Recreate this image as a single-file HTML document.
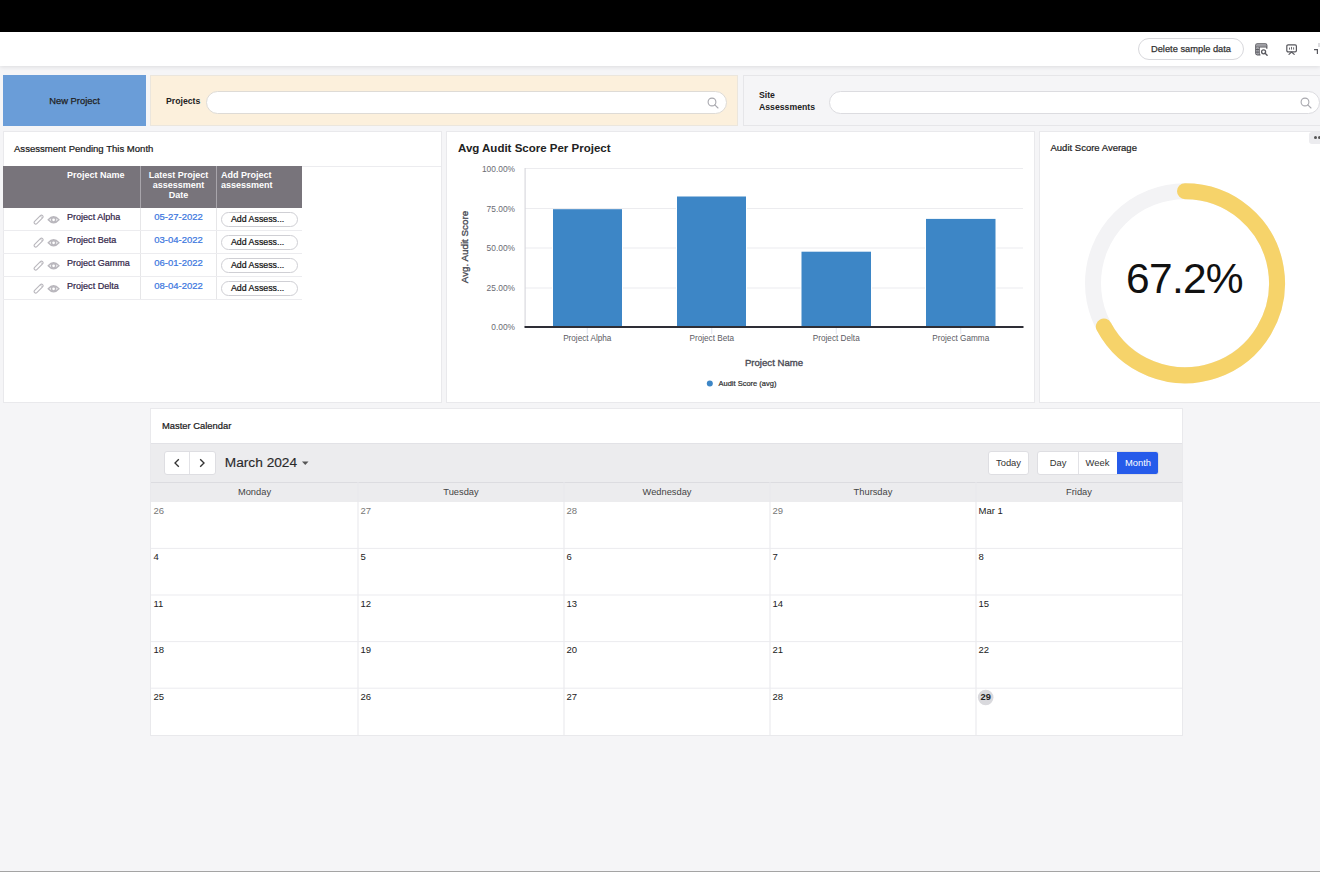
<!DOCTYPE html>
<html><head><meta charset="utf-8">
<style>
*{box-sizing:border-box;margin:0;padding:0}
html,body{width:1320px;height:872px;overflow:hidden;background:#f5f5f7;font-family:"Liberation Sans",sans-serif;color:#222}
.abs{position:absolute}
#topbar{left:0;top:0;width:1320px;height:32px;background:#000}
#hdr{left:0;top:32px;width:1320px;height:34px;background:#fff;box-shadow:0 1px 4px rgba(0,0,0,.10)}
#bottom{left:0;top:871px;width:1320px;height:1px;background:#a4a4a4}
.pill{border:1px solid #d8d8dc;border-radius:12px;background:#fff}
.th{font-size:9px;font-weight:bold;color:#fff;line-height:10px;white-space:nowrap}
.ylab{width:60px;text-align:right;font-size:8.4px;color:#6b6b73;line-height:12px}
.xlab{width:100px;text-align:center;font-size:8.2px;color:#5b5b63;white-space:nowrap}
.calbtn{background:#fff;border:1px solid #dedee2;border-radius:3px;color:#333}
.sb{-webkit-text-stroke-width:0.22px}
.panel{background:#fff;border:1px solid #e9e9ec}
</style></head>
<body>
<div id="topbar" class="abs"></div>
<div id="hdr" class="abs">
  <div class="abs pill" style="left:1138px;top:6px;width:106px;height:22px;font-size:9.3px;line-height:20px;text-align:center;color:#333;-webkit-text-stroke:0.25px #333">Delete sample data</div>

  <svg class="abs" style="left:1255px;top:11px" width="14" height="13" viewBox="0 0 14 13">
    <path d="M11.8 5.8 V2.3 Q11.8 0.8 10.3 0.8 H2.3 Q0.8 0.8 0.8 2.3 V10.3 Q0.8 11.8 2.3 11.8 H5.4" fill="none" stroke="#58585e" stroke-width="1.25"/>
    <rect x="1.2" y="1.3" width="10.2" height="2.4" fill="#9a9aa0"/>
    <path d="M0.8 4 H11.8" stroke="#58585e" stroke-width="1"/>
    <path d="M4.2 4 V11.8" stroke="#58585e" stroke-width="1.1"/>
    <rect x="1.3" y="4.6" width="2.4" height="6.6" fill="#9a9aa0"/>
    <path d="M0.8 6.6 H4.2 M0.8 9.1 H4.2" stroke="#58585e" stroke-width="1"/>
    <circle cx="8.7" cy="8.9" r="3.1" fill="#fff"/>
    <circle cx="8.6" cy="8.8" r="2" fill="none" stroke="#58585e" stroke-width="1.3"/>
    <path d="M10.1 10.3 L12.1 12.2" stroke="#58585e" stroke-width="1.4" stroke-linecap="round"/>
  </svg>
  <svg class="abs" style="left:1285.5px;top:11.5px" width="11" height="11" viewBox="0 0 11 11">
    <rect x="0.8" y="0.9" width="9.6" height="7" rx="1.3" fill="none" stroke="#58585e" stroke-width="1.2"/>
    <path d="M3.5 3.6 V5.6 M5.5 2.9 V5.6 M7.6 3.3 V5.6" stroke="#58585e" stroke-width="0.9"/>
    <path d="M5.6 8 L3 10.4 M5.6 8 L8.2 10.4" stroke="#58585e" stroke-width="1.1" stroke-linecap="round"/>
  </svg>
  <svg class="abs" style="left:1313px;top:10px" width="7" height="12" viewBox="0 0 7 12">
    <path d="M1 7.6 H4.4 V12" fill="none" stroke="#58585e" stroke-width="1.2"/>
    <path d="M6 1 V5" stroke="#d0d0d4" stroke-width="1.5"/>
  </svg>
</div>

<!-- row 1 -->
<div class="abs" style="left:3px;top:75px;width:143px;height:51px;background:#6a9dd8;font-size:9.4px;line-height:51px;text-align:center;color:#222;-webkit-text-stroke:0.25px #222">New Project</div>
<div class="abs" style="left:150px;top:75px;width:588px;height:51px;background:#fcf0dc;border:1px solid #ebe6dd">
  <div class="abs" style="left:15px;top:20px;font-size:8.7px;font-weight:bold;color:#222">Projects</div>
  <div class="abs pill" style="left:55px;top:15px;width:521px;height:23px;border-color:#dedbd6"><svg class="abs" style="right:6.5px;top:3.6px" width="14" height="14" viewBox="0 0 14 14"><circle cx="6" cy="6" r="3.9" fill="none" stroke="#a8a8ae" stroke-width="1.1"/><path d="M8.8 8.8 L12 12" stroke="#a8a8ae" stroke-width="1.1" stroke-linecap="round"/></svg></div>
</div>
<div class="abs" style="left:743px;top:75px;width:590px;height:51px;background:#f5f5f7;border:1px solid #e6e6e9">
  <div class="abs" style="left:15px;top:13px;font-size:8.7px;font-weight:bold;color:#222;line-height:12px">Site<br>Assessments</div>
  <div class="abs pill" style="left:85px;top:15px;width:491px;height:23px;border-color:#dcdce0"><svg class="abs" style="right:6.5px;top:3.6px" width="14" height="14" viewBox="0 0 14 14"><circle cx="6" cy="6" r="3.9" fill="none" stroke="#a8a8ae" stroke-width="1.1"/><path d="M8.8 8.8 L12 12" stroke="#a8a8ae" stroke-width="1.1" stroke-linecap="round"/></svg></div>
</div>

<!-- row 2 -->
<div class="abs panel" style="left:3px;top:131px;width:439px;height:272px">
  <div class="abs sb" style="left:10px;top:11px;font-size:9.55px;color:#1a1a1a;white-space:nowrap">Assessment Pending This Month</div>
  <div class="abs" style="left:0;top:34px;width:437px;height:1px;background:#ececef"></div>
  <div class="abs" style="left:-1px;top:34px;width:299px;height:42px;background:#78747b"></div>
  <div class="abs" style="left:136px;top:34px;width:1px;height:133px;background:#e6e6e8"></div><div class="abs" style="left:136px;top:34px;width:1px;height:42px;background:#a8a5ab"></div>
  <div class="abs" style="left:212px;top:34px;width:1px;height:133px;background:#e6e6e8"></div><div class="abs" style="left:212px;top:34px;width:1px;height:42px;background:#a8a5ab"></div>
  <div class="abs th" style="left:63px;top:38px">Project Name</div>
  <div class="abs th" style="left:137px;top:38px;width:75px;text-align:center">Latest Project<br>assessment<br>Date</div>
  <div class="abs th" style="left:217px;top:38px">Add Project<br>assessment</div>
  <div class="abs" style="left:-1px;top:76px;width:299px;height:23px;border-bottom:1px solid #ececef">
    <svg class="abs" style="left:30px;top:6px" width="12" height="12" viewBox="0 0 12 12"><rect x="0" y="4.1" width="11.2" height="3.1" rx="1.55" transform="rotate(-45 5.6 5.65)" fill="none" stroke="#b9b7bd" stroke-width="1.1"/><path d="M7.6 2.2 L9.2 3.8" stroke="#b9b7bd" stroke-width="1"/></svg><svg class="abs" style="left:44px;top:7px" width="14" height="10" viewBox="0 0 14 10"><path d="M1.3 4.8 Q6.6 -1.3 11.9 4.8 Q6.6 10.9 1.3 4.8 Z" fill="none" stroke="#b9b7bd" stroke-width="1.45"/><circle cx="6.6" cy="4.8" r="2.1" fill="none" stroke="#b9b7bd" stroke-width="1.5"/></svg>
    <div class="abs sb" style="left:64px;top:4px;font-size:9.05px;color:#33264a;white-space:nowrap">Project Alpha</div>
    <div class="abs sb" style="left:138px;top:3px;width:75px;text-align:center;font-size:9.5px;color:#3b76e0">05-27-2022</div>
    <div class="abs" style="left:218px;top:4px;width:77px;height:15px;border:1px solid #cfcfd4;border-radius:8px;font-size:8.8px;line-height:13px;text-align:left;padding-left:9px;color:#111;-webkit-text-stroke-width:0.22px">Add Assess...</div>
  </div>
  <div class="abs" style="left:-1px;top:99px;width:299px;height:23px;border-bottom:1px solid #ececef">
    <svg class="abs" style="left:30px;top:6px" width="12" height="12" viewBox="0 0 12 12"><rect x="0" y="4.1" width="11.2" height="3.1" rx="1.55" transform="rotate(-45 5.6 5.65)" fill="none" stroke="#b9b7bd" stroke-width="1.1"/><path d="M7.6 2.2 L9.2 3.8" stroke="#b9b7bd" stroke-width="1"/></svg><svg class="abs" style="left:44px;top:7px" width="14" height="10" viewBox="0 0 14 10"><path d="M1.3 4.8 Q6.6 -1.3 11.9 4.8 Q6.6 10.9 1.3 4.8 Z" fill="none" stroke="#b9b7bd" stroke-width="1.45"/><circle cx="6.6" cy="4.8" r="2.1" fill="none" stroke="#b9b7bd" stroke-width="1.5"/></svg>
    <div class="abs sb" style="left:64px;top:4px;font-size:9.05px;color:#33264a;white-space:nowrap">Project Beta</div>
    <div class="abs sb" style="left:138px;top:3px;width:75px;text-align:center;font-size:9.5px;color:#3b76e0">03-04-2022</div>
    <div class="abs" style="left:218px;top:4px;width:77px;height:15px;border:1px solid #cfcfd4;border-radius:8px;font-size:8.8px;line-height:13px;text-align:left;padding-left:9px;color:#111;-webkit-text-stroke-width:0.22px">Add Assess...</div>
  </div>
  <div class="abs" style="left:-1px;top:122px;width:299px;height:23px;border-bottom:1px solid #ececef">
    <svg class="abs" style="left:30px;top:6px" width="12" height="12" viewBox="0 0 12 12"><rect x="0" y="4.1" width="11.2" height="3.1" rx="1.55" transform="rotate(-45 5.6 5.65)" fill="none" stroke="#b9b7bd" stroke-width="1.1"/><path d="M7.6 2.2 L9.2 3.8" stroke="#b9b7bd" stroke-width="1"/></svg><svg class="abs" style="left:44px;top:7px" width="14" height="10" viewBox="0 0 14 10"><path d="M1.3 4.8 Q6.6 -1.3 11.9 4.8 Q6.6 10.9 1.3 4.8 Z" fill="none" stroke="#b9b7bd" stroke-width="1.45"/><circle cx="6.6" cy="4.8" r="2.1" fill="none" stroke="#b9b7bd" stroke-width="1.5"/></svg>
    <div class="abs sb" style="left:64px;top:4px;font-size:9.05px;color:#33264a;white-space:nowrap">Project Gamma</div>
    <div class="abs sb" style="left:138px;top:3px;width:75px;text-align:center;font-size:9.5px;color:#3b76e0">06-01-2022</div>
    <div class="abs" style="left:218px;top:4px;width:77px;height:15px;border:1px solid #cfcfd4;border-radius:8px;font-size:8.8px;line-height:13px;text-align:left;padding-left:9px;color:#111;-webkit-text-stroke-width:0.22px">Add Assess...</div>
  </div>
  <div class="abs" style="left:-1px;top:145px;width:299px;height:23px;border-bottom:1px solid #ececef">
    <svg class="abs" style="left:30px;top:6px" width="12" height="12" viewBox="0 0 12 12"><rect x="0" y="4.1" width="11.2" height="3.1" rx="1.55" transform="rotate(-45 5.6 5.65)" fill="none" stroke="#b9b7bd" stroke-width="1.1"/><path d="M7.6 2.2 L9.2 3.8" stroke="#b9b7bd" stroke-width="1"/></svg><svg class="abs" style="left:44px;top:7px" width="14" height="10" viewBox="0 0 14 10"><path d="M1.3 4.8 Q6.6 -1.3 11.9 4.8 Q6.6 10.9 1.3 4.8 Z" fill="none" stroke="#b9b7bd" stroke-width="1.45"/><circle cx="6.6" cy="4.8" r="2.1" fill="none" stroke="#b9b7bd" stroke-width="1.5"/></svg>
    <div class="abs sb" style="left:64px;top:4px;font-size:9.05px;color:#33264a;white-space:nowrap">Project Delta</div>
    <div class="abs sb" style="left:138px;top:3px;width:75px;text-align:center;font-size:9.5px;color:#3b76e0">08-04-2022</div>
    <div class="abs" style="left:218px;top:4px;width:77px;height:15px;border:1px solid #cfcfd4;border-radius:8px;font-size:8.8px;line-height:13px;text-align:left;padding-left:9px;color:#111;-webkit-text-stroke-width:0.22px">Add Assess...</div>
  </div>
</div>
<div class="abs panel" style="left:446px;top:131px;width:589px;height:272px"></div>
<div class="abs panel" style="left:1039px;top:131px;width:290px;height:272px"></div>
<svg class="abs" style="left:0;top:0" width="1320" height="872" viewBox="0 0 1320 872"><rect x="525" y="168.0" width="498" height="1" fill="#ececef"/><rect x="525" y="208.0" width="498" height="1" fill="#ececef"/><rect x="525" y="247.5" width="498" height="1" fill="#ececef"/><rect x="525" y="287.5" width="498" height="1" fill="#ececef"/><rect x="524.5" y="168" width="1.2" height="159" fill="#d9d9de"/><rect x="552" y="209.2" width="71" height="116.80000000000001" fill="#fff"/><rect x="553" y="209.2" width="69" height="116.80000000000001" fill="#3d86c6"/><rect x="676" y="196.5" width="71" height="129.5" fill="#fff"/><rect x="677" y="196.5" width="69" height="129.5" fill="#3d86c6"/><rect x="800.5" y="251.7" width="71.5" height="74.30000000000001" fill="#fff"/><rect x="801.5" y="251.7" width="69.5" height="74.30000000000001" fill="#3d86c6"/><rect x="925" y="218.9" width="71.5" height="107.1" fill="#fff"/><rect x="926" y="218.9" width="69.5" height="107.1" fill="#3d86c6"/><rect x="586.75" y="328" width="1" height="6" fill="#dfe3ee"/><rect x="711.25" y="328" width="1" height="6" fill="#dfe3ee"/><rect x="835.75" y="328" width="1" height="6" fill="#dfe3ee"/><rect x="960.25" y="328" width="1" height="6" fill="#dfe3ee"/><rect x="524.5" y="326" width="499" height="2" fill="#2e2e36"/><circle cx="709.8" cy="383.4" r="3" fill="#3d86c6"/><circle cx="1185" cy="283.2" r="92" fill="none" stroke="#f3f3f5" stroke-width="16"/><path d="M1185 191.2 A92 92 0 1 1 1103.83 326.50" fill="none" stroke="#f6d36a" stroke-width="16" stroke-linecap="round"/></svg>
<div class="abs" style="left:458px;top:141.5px;font-size:11.5px;font-weight:bold;color:#222;white-space:nowrap">Avg Audit Score Per Project</div>
<div class="abs ylab" style="left:455px;top:162.5px">100.00%</div>
<div class="abs ylab" style="left:455px;top:202.5px">75.00%</div>
<div class="abs ylab" style="left:455px;top:242px">50.00%</div>
<div class="abs ylab" style="left:455px;top:282px">25.00%</div>
<div class="abs ylab" style="left:455px;top:321px">0.00%</div>
<div class="abs xlab" style="left:537.25px;top:333.7px">Project Alpha</div>
<div class="abs xlab" style="left:661.75px;top:333.7px">Project Beta</div>
<div class="abs xlab" style="left:786.25px;top:333.7px">Project Delta</div>
<div class="abs xlab" style="left:910.75px;top:333.7px">Project Gamma</div>
<div class="abs" style="left:425px;top:241px;width:80px;height:12px;transform:rotate(-90deg);font-size:9.8px;color:#4b4b55;-webkit-text-stroke-width:0.35px;text-align:center;line-height:12px;white-space:nowrap">Avg. Audit Score</div>
<div class="abs" style="left:724px;top:356.5px;width:100px;text-align:center;font-size:9.6px;color:#4b4b55;-webkit-text-stroke-width:0.35px">Project Name</div>
<div class="abs sb" style="left:718.5px;top:379.3px;font-size:7.5px;color:#333;white-space:nowrap">Audit Score (avg)</div>
<div class="abs sb" style="left:1050.5px;top:142.3px;font-size:9.5px;color:#222;white-space:nowrap">Audit Score Average</div>
<div class="abs" style="left:1085px;top:255px;width:200px;text-align:center;font-size:42.5px;letter-spacing:-0.75px;color:#111;line-height:50px;margin-top:-1.5px;margin-left:-0.5px">67.2%</div>
<div class="abs" style="left:1309px;top:132px;width:20px;height:12px;background:#ececef;border-radius:3px"><div class="abs" style="left:5.4px;top:4.2px;width:3px;height:3px;border-radius:1.5px;background:#555"></div><div class="abs" style="left:8.9px;top:4.2px;width:3px;height:3px;border-radius:1.5px;background:#555"></div></div>


<!-- calendar -->
<div class="abs panel" style="left:150px;top:408px;width:1033px;height:328px"></div>
<div class="abs sb" style="left:162px;top:419.7px;font-size:9.4px;color:#1a1a1a;white-space:nowrap">Master Calendar</div>
<div class="abs" style="left:151px;top:442.5px;width:1031px;height:59.5px;background:#ececee;border-top:1px solid #e2e2e6"></div>
<div class="abs" style="left:151px;top:481.5px;width:1031px;height:1px;background:#dcdce0"></div>
<div class="abs calbtn" style="left:164px;top:451px;width:52px;height:24px"></div>
<div class="abs" style="left:189px;top:452px;width:1px;height:22px;background:#e2e2e6"></div>
<svg class="abs" style="left:164px;top:451px" width="52" height="24" viewBox="0 0 52 24"><path d="M14.8 8.3 L11 12 L14.8 15.7" fill="none" stroke="#333" stroke-width="1.35"/><path d="M36.2 8.3 L40 12 L36.2 15.7" fill="none" stroke="#333" stroke-width="1.35"/></svg>
<div class="abs sb" style="left:224.8px;top:454px;font-size:13.7px;color:#2a2a2a;white-space:nowrap;line-height:18px;-webkit-text-stroke-width:0.15px">March 2024</div>
<svg class="abs" style="left:302.3px;top:461px" width="7" height="5" viewBox="0 0 7 5"><path d="M0 0.5 L6.5 0.5 L3.25 4 Z" fill="#555"/></svg>
<div class="abs calbtn" style="left:988px;top:451px;width:41px;height:24px;text-align:center;line-height:21px;font-size:9.4px">Today</div>
<div class="abs calbtn" style="left:1037px;top:451px;width:122px;height:24px;overflow:hidden">
  <div class="abs" style="left:0;top:0;width:40px;height:22px;text-align:center;line-height:21px;font-size:9.4px">Day</div>
  <div class="abs" style="left:39.5px;top:0;width:1px;height:22px;background:#e2e2e6"></div>
  <div class="abs" style="left:40px;top:0;width:39px;height:22px;text-align:center;line-height:21px;font-size:9.4px">Week</div>
  <div class="abs" style="left:79px;top:-1px;width:42px;height:24px;background:#265bea;color:#fff;text-align:center;line-height:23px;font-size:9.4px">Month</div>
</div>
<div class="abs" style="left:151px;top:485.8px;width:207px;text-align:center;font-size:9.3px;color:#444;line-height:13px">Monday</div>
<div class="abs" style="left:358px;top:485.8px;width:206px;text-align:center;font-size:9.3px;color:#444;line-height:13px">Tuesday</div>
<div class="abs" style="left:564px;top:485.8px;width:206px;text-align:center;font-size:9.3px;color:#444;line-height:13px">Wednesday</div>
<div class="abs" style="left:770px;top:485.8px;width:206px;text-align:center;font-size:9.3px;color:#444;line-height:13px">Thursday</div>
<div class="abs" style="left:976px;top:485.8px;width:206px;text-align:center;font-size:9.3px;color:#444;line-height:13px">Friday</div>
<svg class="abs" style="left:0;top:0" width="1320" height="872" viewBox="0 0 1320 872"><rect x="357.5" y="482" width="1" height="253" fill="#e8e8eb"/><rect x="563.5" y="482" width="1" height="253" fill="#e8e8eb"/><rect x="769.5" y="482" width="1" height="253" fill="#e8e8eb"/><rect x="975.5" y="482" width="1" height="253" fill="#e8e8eb"/><rect x="151" y="547.9" width="1031" height="1" fill="#ececef"/><rect x="151" y="594.5" width="1031" height="1" fill="#ececef"/><rect x="151" y="641.1" width="1031" height="1" fill="#ececef"/><rect x="151" y="687.7" width="1031" height="1" fill="#ececef"/><circle cx="985.7" cy="697.5" r="7.8" fill="#d9d9dd"/></svg>
<div class="abs" style="left:153.5px;top:504.6px;font-size:9.5px;color:#777;line-height:12px">26</div>
<div class="abs" style="left:360.5px;top:504.6px;font-size:9.5px;color:#777;line-height:12px">27</div>
<div class="abs" style="left:566.5px;top:504.6px;font-size:9.5px;color:#777;line-height:12px">28</div>
<div class="abs" style="left:772.5px;top:504.6px;font-size:9.5px;color:#777;line-height:12px">29</div>
<div class="abs" style="left:978.5px;top:504.6px;font-size:9.5px;color:#222;line-height:12px">Mar 1</div>
<div class="abs" style="left:153.5px;top:551.2px;font-size:9.5px;color:#222;line-height:12px">4</div>
<div class="abs" style="left:360.5px;top:551.2px;font-size:9.5px;color:#222;line-height:12px">5</div>
<div class="abs" style="left:566.5px;top:551.2px;font-size:9.5px;color:#222;line-height:12px">6</div>
<div class="abs" style="left:772.5px;top:551.2px;font-size:9.5px;color:#222;line-height:12px">7</div>
<div class="abs" style="left:978.5px;top:551.2px;font-size:9.5px;color:#222;line-height:12px">8</div>
<div class="abs" style="left:153.5px;top:597.8px;font-size:9.5px;color:#222;line-height:12px">11</div>
<div class="abs" style="left:360.5px;top:597.8px;font-size:9.5px;color:#222;line-height:12px">12</div>
<div class="abs" style="left:566.5px;top:597.8px;font-size:9.5px;color:#222;line-height:12px">13</div>
<div class="abs" style="left:772.5px;top:597.8px;font-size:9.5px;color:#222;line-height:12px">14</div>
<div class="abs" style="left:978.5px;top:597.8px;font-size:9.5px;color:#222;line-height:12px">15</div>
<div class="abs" style="left:153.5px;top:644.4px;font-size:9.5px;color:#222;line-height:12px">18</div>
<div class="abs" style="left:360.5px;top:644.4px;font-size:9.5px;color:#222;line-height:12px">19</div>
<div class="abs" style="left:566.5px;top:644.4px;font-size:9.5px;color:#222;line-height:12px">20</div>
<div class="abs" style="left:772.5px;top:644.4px;font-size:9.5px;color:#222;line-height:12px">21</div>
<div class="abs" style="left:978.5px;top:644.4px;font-size:9.5px;color:#222;line-height:12px">22</div>
<div class="abs" style="left:153.5px;top:691.0px;font-size:9.5px;color:#222;line-height:12px">25</div>
<div class="abs" style="left:360.5px;top:691.0px;font-size:9.5px;color:#222;line-height:12px">26</div>
<div class="abs" style="left:566.5px;top:691.0px;font-size:9.5px;color:#222;line-height:12px">27</div>
<div class="abs" style="left:772.5px;top:691.0px;font-size:9.5px;color:#222;line-height:12px">28</div>
<div class="abs" style="left:980.5px;top:691.0px;font-size:9.3px;font-weight:bold;color:#222;line-height:12px">29</div>


<div id="bottom" class="abs"></div>
</body></html>
